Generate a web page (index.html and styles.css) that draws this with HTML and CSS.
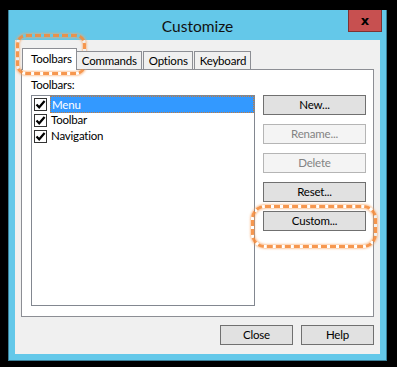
FILE: index.html
```html
<!DOCTYPE html>
<html lang="en">
  <head>
    <meta charset="UTF-8" />
    <title>Customize</title>
    <link rel="stylesheet" href="styles.css">
  </head>
  <body>
    <div class="window">
      <div class="titlebar">
        <span class="title">Customize</span>
        <button class="close-x">x</button>
      </div>

      <div class="client">
        <div class="tabs">
          <div class="tab active">Toolbars</div>
          <div class="tab">Commands</div>
          <div class="tab">Options</div>
          <div class="tab">Keyboard</div>
        </div>

        <div class="panel">
          <div class="left">
            <div class="label">Toolbars:</div>
            <div class="listbox">
              <div class="item">
                <span class="check"><svg width="11" height="11" viewBox="0 0 11 11"><path d="M1.5 5.5 L4.2 8.3 L9.6 2" fill="none" stroke="#000" stroke-width="2.2"/></svg></span>
                <span class="text selected">Menu</span>
              </div>
              <div class="item">
                <span class="check"><svg width="11" height="11" viewBox="0 0 11 11"><path d="M1.5 5.5 L4.2 8.3 L9.6 2" fill="none" stroke="#000" stroke-width="2.2"/></svg></span>
                <span class="text">Toolbar</span>
              </div>
              <div class="item">
                <span class="check"><svg width="11" height="11" viewBox="0 0 11 11"><path d="M1.5 5.5 L4.2 8.3 L9.6 2" fill="none" stroke="#000" stroke-width="2.2"/></svg></span>
                <span class="text">Navigation</span>
              </div>
            </div>
          </div>

          <div class="side">
            <button class="btn">New...</button>
            <button class="btn" disabled>Rename...</button>
            <button class="btn" disabled>Delete</button>
            <button class="btn">Reset...</button>
            <button class="btn">Custom...</button>
          </div>
        </div>

        <div class="footer">
          <button class="btn small">Close</button>
          <button class="btn small">Help</button>
        </div>
      </div>

      <!-- hand drawn marks -->
      <div class="ring ring-tab"></div>
      <div class="ring ring-custom"></div>
    </div>
  </body>
</html>
```

FILE: styles.css
```css
* {
  box-sizing: border-box;
}

body {
  margin: 0;
  background: #000;
  font-family: Lato, 'Noto Sans', sans-serif;
  font-size: 11.5px;
  letter-spacing: -0.2px;
  color: #000;
}

.window {
  position: relative;
  width: 379px;
  height: 351px;
  margin: 10px 0 0 8px;
  background: #64c8e9;
  border: 1px solid #3a7f98;
  border-top: none;
  display: flex;
  flex-direction: column;
}

.titlebar {
  height: 30px;
  flex-shrink: 0;
  display: flex;
  justify-content: center;
  align-items: center;
  position: relative;
}

.title {
  font-size: 15.5px;
  letter-spacing: 0;
  color: #111;
  margin-top: 1px;
}

.close-x {
  position: absolute;
  top: 0;
  right: 4px;
  width: 34px;
  height: 22px;
  background: #c75050;
  border: 1px solid #7d3232;
  border-top: none;
  color: #000;
  font-family: 'DejaVu Sans', sans-serif;
  font-weight: bold;
  font-size: 13px;
  line-height: 16px;
  padding: 0;
}

.client {
  flex: 1;
  margin: 0 6px 6px 6px;
  background: #f0f0f0;
  padding: 8px 6px 0 6px;
  display: flex;
  flex-direction: column;
}

.tabs {
  display: flex;
  align-items: flex-end;
  height: 21px;
  flex-shrink: 0;
  padding-left: 1px;
  position: relative;
  z-index: 1;
}

.tab {
  height: 18px;
  padding: 0 4px 0 5px;
  border: 1px solid #8c8e94;
  border-bottom: none;
  background: #f0f0f0;
  line-height: 17px;
  margin-right: 1px;
}

.tab.active {
  height: 22px;
  padding: 0 4px 0 8px;
  margin-left: 0;
  margin-bottom: -1px;
  background: #fff;
  line-height: 19px;
  margin-right: -1px;
  position: relative;
}

.panel {
  height: 248px;
  flex-shrink: 0;
  background: #fff;
  border: 1px solid #8c8e94;
  display: flex;
  padding: 7px 6px 0 9px;
  gap: 8px;
}

.left {
  display: flex;
  flex-direction: column;
}

.label {
  height: 16px;
  line-height: 16px;
  margin-bottom: 2px;
}

.listbox {
  width: 224px;
  height: 211px;
  border: 1px solid #828790;
}

.item {
  display: flex;
  align-items: center;
  height: 16px;
}

.check {
  width: 13px;
  height: 13px;
  border: 1px solid #333;
  background: #fff;
  margin: 0 3px 0 2px;
  display: flex;
}

.text {
  line-height: 16px;
  padding: 0 2px 0 1px;
}

.text.selected {
  flex: 1;
  height: 17px;
  line-height: 15px;
  background: #3399ff;
  color: #fff;
  border: 1px dotted #c77a3a;
}

.side {
  display: flex;
  flex-direction: column;
  gap: 9px;
  margin-top: 18px;
}

.btn {
  width: 103px;
  height: 20px;
  background: #e1e1e1;
  border: 1px solid #707070;
  font-family: Lato, 'Noto Sans', sans-serif;
  font-size: 11.5px;
  letter-spacing: -0.2px;
  color: #000;
  padding: 0;
  line-height: 16px;
  flex-shrink: 0;
}

.btn:disabled {
  background: #f4f4f4;
  border-color: #b5b5b5;
  color: #838383;
}

.footer {
  display: flex;
  justify-content: flex-end;
  gap: 8px;
  margin-top: 8px;
}

.btn.small {
  width: 73px;
}

.ring {
  position: absolute;
  border: 3px dashed rgba(246, 140, 60, 0.9);
  border-radius: 10px;
  box-shadow: 0 0 2px 1px rgba(248, 165, 100, 0.6), inset 0 0 2px 1px rgba(248, 165, 100, 0.6);
  filter: blur(0.6px);
}

.ring-tab {
  left: 7px;
  top: 24px;
  width: 70px;
  height: 41px;
}

.ring-custom {
  left: 242px;
  top: 195px;
  width: 126px;
  height: 43px;
  border-radius: 14px;
}
```
